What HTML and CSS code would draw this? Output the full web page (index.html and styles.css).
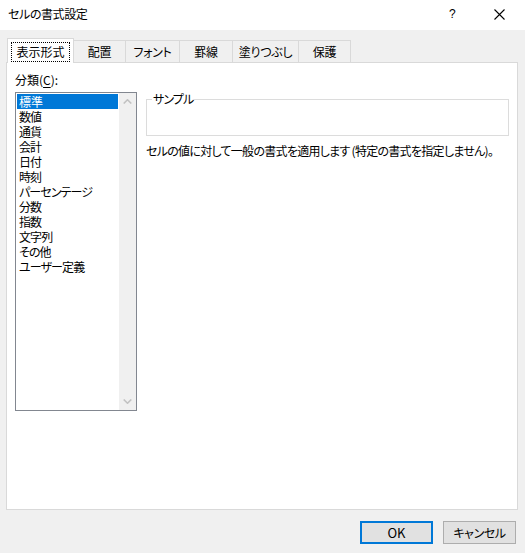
FILE: index.html
```html
<!DOCTYPE html>
<html lang="ja">
<head>
<meta charset="utf-8">
<title>セルの書式設定</title>
<link rel="stylesheet" href="styles.css">
</head>
<body>
<div class="window">
  <div class="titlebar">
    <span class="title">セルの書式設定</span>
    <span class="help">?</span>
    <span class="close"><svg width="11" height="11" viewBox="0 0 11 11"><path d="M0.5 0.5L10.5 10.5M10.5 0.5L0.5 10.5" stroke="#000" stroke-width="1.1" fill="none"/></svg></span>
  </div>
  <div class="main">
    <div class="tabs">
      <div class="tab active"><span class="focus">表示形式</span></div>
      <div class="tab w52">配置</div>
      <div class="tab w54">フォント</div>
      <div class="tab w53">罫線</div>
      <div class="tab w66">塗りつぶし</div>
      <div class="tab w52">保護</div>
    </div>
    <div class="panel">
      <div class="left">
        <div class="label">分類(<u>C</u>):</div>
        <div class="listbox">
          <ul class="items">
            <li class="selected">標準</li>
            <li>数値</li>
            <li>通貨</li>
            <li>会計</li>
            <li>日付</li>
            <li>時刻</li>
            <li>パーセンテージ</li>
            <li>分数</li>
            <li>指数</li>
            <li>文字列</li>
            <li>その他</li>
            <li>ユーザー定義</li>
          </ul>
          <div class="scrollbar">
            <div class="arrow"><svg width="9" height="5" viewBox="0 0 9 5"><polyline points="0.7,4.5 4.5,0.8 8.3,4.5" stroke="#c2c2c2" stroke-width="1.6" fill="none"/></svg></div>
            <div class="track"></div>
            <div class="arrow"><svg width="9" height="5" viewBox="0 0 9 5"><polyline points="0.7,0.5 4.5,4.2 8.3,0.5" stroke="#c2c2c2" stroke-width="1.6" fill="none"/></svg></div>
          </div>
        </div>
      </div>
      <div class="right">
        <fieldset class="sample">
          <legend>サンプル</legend>
          <div class="sample-body"></div>
        </fieldset>
        <p class="desc">セルの値に対して一般の書式を適用します (特定の書式を指定しません)。</p>
      </div>
    </div>
    <div class="buttons">
      <button class="btn default">OK</button>
      <button class="btn">キャンセル</button>
    </div>
  </div>
</div>
</body>
</html>
```

FILE: styles.css
```css
* { box-sizing: border-box; }

html, body {
  margin: 0;
  padding: 0;
}

body {
  width: 525px;
  height: 553px;
  background: #f0f0f0;
  font-family: "Noto Sans CJK JP", "Noto Sans", sans-serif;
  font-size: 12px;
  color: #000;
  font-feature-settings: "palt" 1;
  overflow: hidden;
}

.window {
  width: 525px;
  height: 553px;
  display: flex;
  flex-direction: column;
}

.titlebar {
  height: 30px;
  background: #fff;
  display: flex;
  align-items: center;
  padding-left: 8px;
  flex: none;
}

.title {
  flex: 1;
  line-height: 16px;
  margin-top: -2px;
  letter-spacing: -0.4px;
}

.help {
  font-family: "Liberation Sans", sans-serif;
  font-size: 12px;
  width: 10px;
  margin-right: 36px;
  margin-top: -2px;
  padding-left: 1px;
}

.close {
  display: flex;
  width: 11px;
  height: 11px;
  margin-right: 20px;
  margin-top: -2px;
}

.main {
  flex: 1;
  padding: 8px 8px 0 6px;
  display: flex;
  flex-direction: column;
}

.tabs {
  display: flex;
  align-items: flex-end;
  height: 24px;
  padding-left: 1px;
  flex: none;
}

.tab {
  height: 22px;
  border-top: 1px solid #d9d9d9;
  border-right: 1px solid #d9d9d9;
  background: #f0f0f0;
  display: flex;
  align-items: center;
  justify-content: center;
  line-height: 16px;
  padding-top: 1px;
  letter-spacing: -0.3px;
}

.w52 { width: 52px; }
.w53 { width: 53px; }
.w54 { width: 54px; }
.w66 { width: 66px; }

.tab.active {
  width: 67px;
  height: 25px;
  margin-bottom: -1px;
  border-left: 1px solid #d9d9d9;
  background: #fff;
  position: relative;
  z-index: 1;
  padding: 3px 3px 1px;
  align-items: flex-start;
  letter-spacing: 0;
}

.focus {
  width: 59px;
  height: 20px;
  border: 1px dotted #000;
  display: flex;
  align-items: center;
  justify-content: center;
}

.panel {
  width: 512px;
  height: 448px;
  background: #fff;
  border: 1px solid #d9d9d9;
  display: flex;
  padding: 9px 8px 0 8px;
  gap: 9px;
  flex: none;
}

.left {
  width: 122px;
  flex: none;
}

.label {
  height: 16px;
  line-height: 16px;
  margin-bottom: 4px;
}

.label u {
  text-underline-offset: 2px;
}

.listbox {
  width: 122px;
  height: 319px;
  border: 1px solid #828790;
  display: flex;
}

.items {
  list-style: none;
  margin: 0;
  padding: 1px 0 0 1px;
  width: 103px;
}

.items li {
  height: 15px;
  line-height: 15px;
  padding-left: 2px;
  width: 101px;
  white-space: nowrap;
  letter-spacing: -0.9px;
}

.items li.selected {
  background: #0078d7;
  color: #fff;
  letter-spacing: 0;
}

.scrollbar {
  width: 17px;
  margin-left: auto;
  background: #f0f0f0;
  display: flex;
  flex-direction: column;
}

.arrow {
  height: 17px;
  display: flex;
  align-items: center;
  justify-content: center;
}

.track {
  flex: 1;
}

.right {
  flex: 1;
  padding-top: 19px;
}

.sample {
  margin: 0;
  padding: 0 6px;
  border: 1px solid #dcdcdc;
  min-width: 0;
}

.sample legend {
  padding: 0 1px;
  margin-left: -1px;
  line-height: 16px;
  height: 16px;
  letter-spacing: -0.9px;
}

.sample-body {
  height: 28px;
}

.desc {
  margin: 7px 0 0 0;
  line-height: 16px;
  white-space: nowrap;
  letter-spacing: -0.72px;
}

.buttons {
  display: flex;
  justify-content: flex-end;
  gap: 10px;
  margin-top: 11px;
  padding-right: 1px;
}

.btn {
  width: 73px;
  height: 23px;
  background: #e1e1e1;
  border: 1px solid #adadad;
  font-family: "Noto Sans CJK JP", "Noto Sans", sans-serif;
  font-size: 12px;
  font-feature-settings: "palt" 1;
  color: #000;
  padding: 0;
  line-height: 16px;
  letter-spacing: -0.4px;
}

.btn.default {
  border: 2px solid #0078d7;
  font-size: 13px;
  letter-spacing: 0;
}
```
